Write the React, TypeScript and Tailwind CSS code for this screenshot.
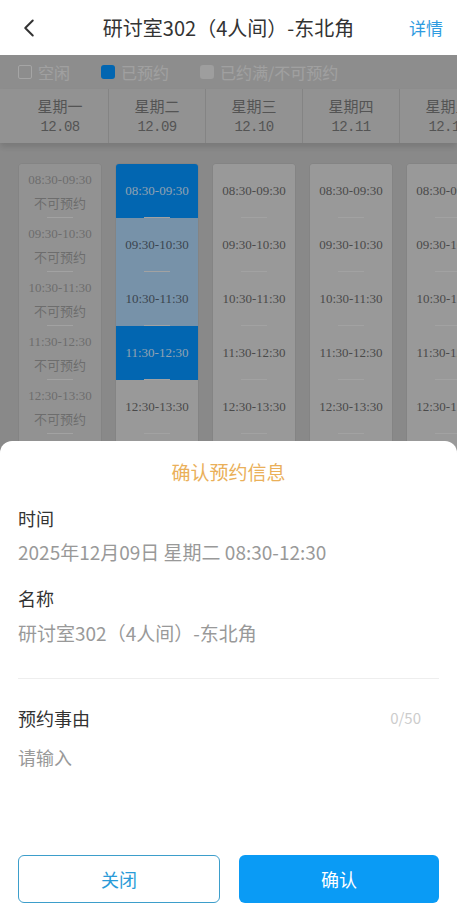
import { ChevronLeft } from "lucide-react";

type slotState = "closed" | "free" | "picked" | "range";

type dayTypes = {
    name: string;
    date: string;
    closed?: boolean;
};

const days: dayTypes[] = [
    { name: "星期一", date: "12.08", closed: true },
    { name: "星期二", date: "12.09" },
    { name: "星期三", date: "12.10" },
    { name: "星期四", date: "12.11" },
    { name: "星期五", date: "12.12" },
];

const times = ["08:30-09:30", "09:30-10:30", "10:30-11:30", "11:30-12:30", "12:30-13:30", "13:30-14:30"];

const getState = (dayIndex: number, slotIndex: number): slotState => {
    if (days[dayIndex].closed) return "closed";
    if (dayIndex === 1) {
        if (slotIndex === 0 || slotIndex === 3) return "picked";
        if (slotIndex === 1 || slotIndex === 2) return "range";
    }
    return "free";
};

const slotStyles: Record<slotState, string> = {
    closed: "bg-[#d2d2d2] text-[#9d9d9d]",
    free: "bg-[#dcdcdc] text-[#6b6b6b]",
    picked: "bg-[#0392fe] text-[#cfe6ff]",
    range: "bg-[#abd2f3] text-[#566472]",
};

const Slot = ({ time, state }: { time: string; state: slotState }) => (
    <div className={`h-[54px] flex flex-col ${slotStyles[state]}`}>
        <div className="flex-1 flex flex-col items-center justify-center font-['Liberation_Serif','Noto_Sans_CJK_SC',serif] text-[13px] leading-[23px]">
            <span>{time}</span>
            {state === "closed" && <span className="font-['Noto_Sans_CJK_SC',sans-serif]">不可预约</span>}
        </div>
        <div className="h-px w-[26px] mx-auto bg-[#e8e8e8]" />
    </div>
);

const App = () => {
    return (
        <div className="relative w-[457px] h-[915px] overflow-hidden bg-[#c5c5c5] font-['Noto_Sans_CJK_SC',sans-serif]">
            {/* Nav bar */}
            <div className="h-[55px] bg-white flex items-center justify-between pl-[14px] pr-[14px]">
                <ChevronLeft size={30} strokeWidth={1.6} color="#333" />
                <div className="text-[20px] text-[#333] ml-[4px]">研讨室302（4人间）-东北角</div>
                <div className="text-[17px] text-[#2f9be0]">详情</div>
            </div>

            {/* Legend */}
            <div className="h-[34px] bg-[#cbcbcb] flex items-center gap-[31px] pl-[18px] text-[16px] text-[#e6e6e6]">
                <div className="flex items-center gap-[6px]">
                    <span className="w-[14px] h-[14px] border border-[#ececec] rounded-[2px]" />
                    空闲
                </div>
                <div className="flex items-center gap-[6px]">
                    <span className="w-[14px] h-[14px] bg-[#0392fe] rounded-[3px]" />
                    已预约
                </div>
                <div className="flex items-center gap-[6px]">
                    <span className="w-[14px] h-[14px] bg-[#e2e2e2] rounded-[3px]" />
                    已约满/不可预约
                </div>
            </div>

            {/* Week header */}
            <div className="h-[54px] bg-[#d2d2d2] flex pl-[12px] shadow-[0_4px_6px_rgba(0,0,0,0.12)] relative">
                {days.map((day) => (
                    <div
                        key={day.date}
                        className="w-[97px] shrink-0 border-r border-[#bebebe] flex flex-col items-center justify-center text-[#797979]"
                    >
                        <span className="text-[15px] leading-[22px]">{day.name}</span>
                        <span className="text-[14px] leading-[20px] font-['Liberation_Mono',monospace] tracking-[-0.6px]">
                            {day.date}
                        </span>
                    </div>
                ))}
            </div>

            {/* Slots */}
            <div className="h-[400px] overflow-hidden flex pl-[12px] pt-[20px]">
                {days.map((day, dayIndex) => (
                    <div key={day.date} className="w-[97px] shrink-0 pl-[6px] pr-[7px]">
                        <div className="rounded-[4px] border border-[#bebebe] overflow-hidden">
                            {times.map((time, slotIndex) => (
                                <Slot key={time} time={time} state={getState(dayIndex, slotIndex)} />
                            ))}
                        </div>
                    </div>
                ))}
            </div>

            {/* Mask */}
            <div className="absolute left-0 right-0 top-[55px] bottom-0 bg-black/30" />

            {/* Confirm sheet */}
            <div className="absolute left-0 right-0 bottom-0 h-[474px] bg-white rounded-t-[12px] px-[18px] pb-[12px] flex flex-col">
                <div className="pt-[18px] text-center text-[19px] leading-[26px] text-[#eab05a]">确认预约信息</div>
                <div className="mt-[20px]">
                    <div className="text-[18px] leading-[26px] text-[#333]">时间</div>
                    <div className="mt-[8px] text-[19px] leading-[26px] text-[#999]">
                        2025年12月09日 星期二 08:30-12:30
                    </div>
                </div>
                <div className="mt-[20px]">
                    <div className="text-[18px] leading-[26px] text-[#333]">名称</div>
                    <div className="mt-[9px] text-[19px] leading-[26px] text-[#999]">研讨室302（4人间）-东北角</div>
                </div>
                <div className="mt-[32px] h-px bg-[#eeeeee]" />
                <div className="mt-[26px] flex items-center justify-between">
                    <span className="text-[18px] leading-[26px] text-[#333]">预约事由</span>
                    <span className="mr-[18px] text-[15px] text-[#cccccc]">0/50</span>
                </div>
                <div className="mt-[13px] text-[18px] leading-[26px] text-[#999]">请输入</div>
                <div className="mt-auto flex gap-[19px]">
                    <button className="flex-1 h-[48px] rounded-[6px] border border-[#3d9ecb] text-[18px] text-[#2a9bd8]">
                        关闭
                    </button>
                    <button className="flex-1 h-[48px] rounded-[6px] bg-[#0a9bf5] text-[18px] text-white">确认</button>
                </div>
            </div>
        </div>
    );
};

export default App;
